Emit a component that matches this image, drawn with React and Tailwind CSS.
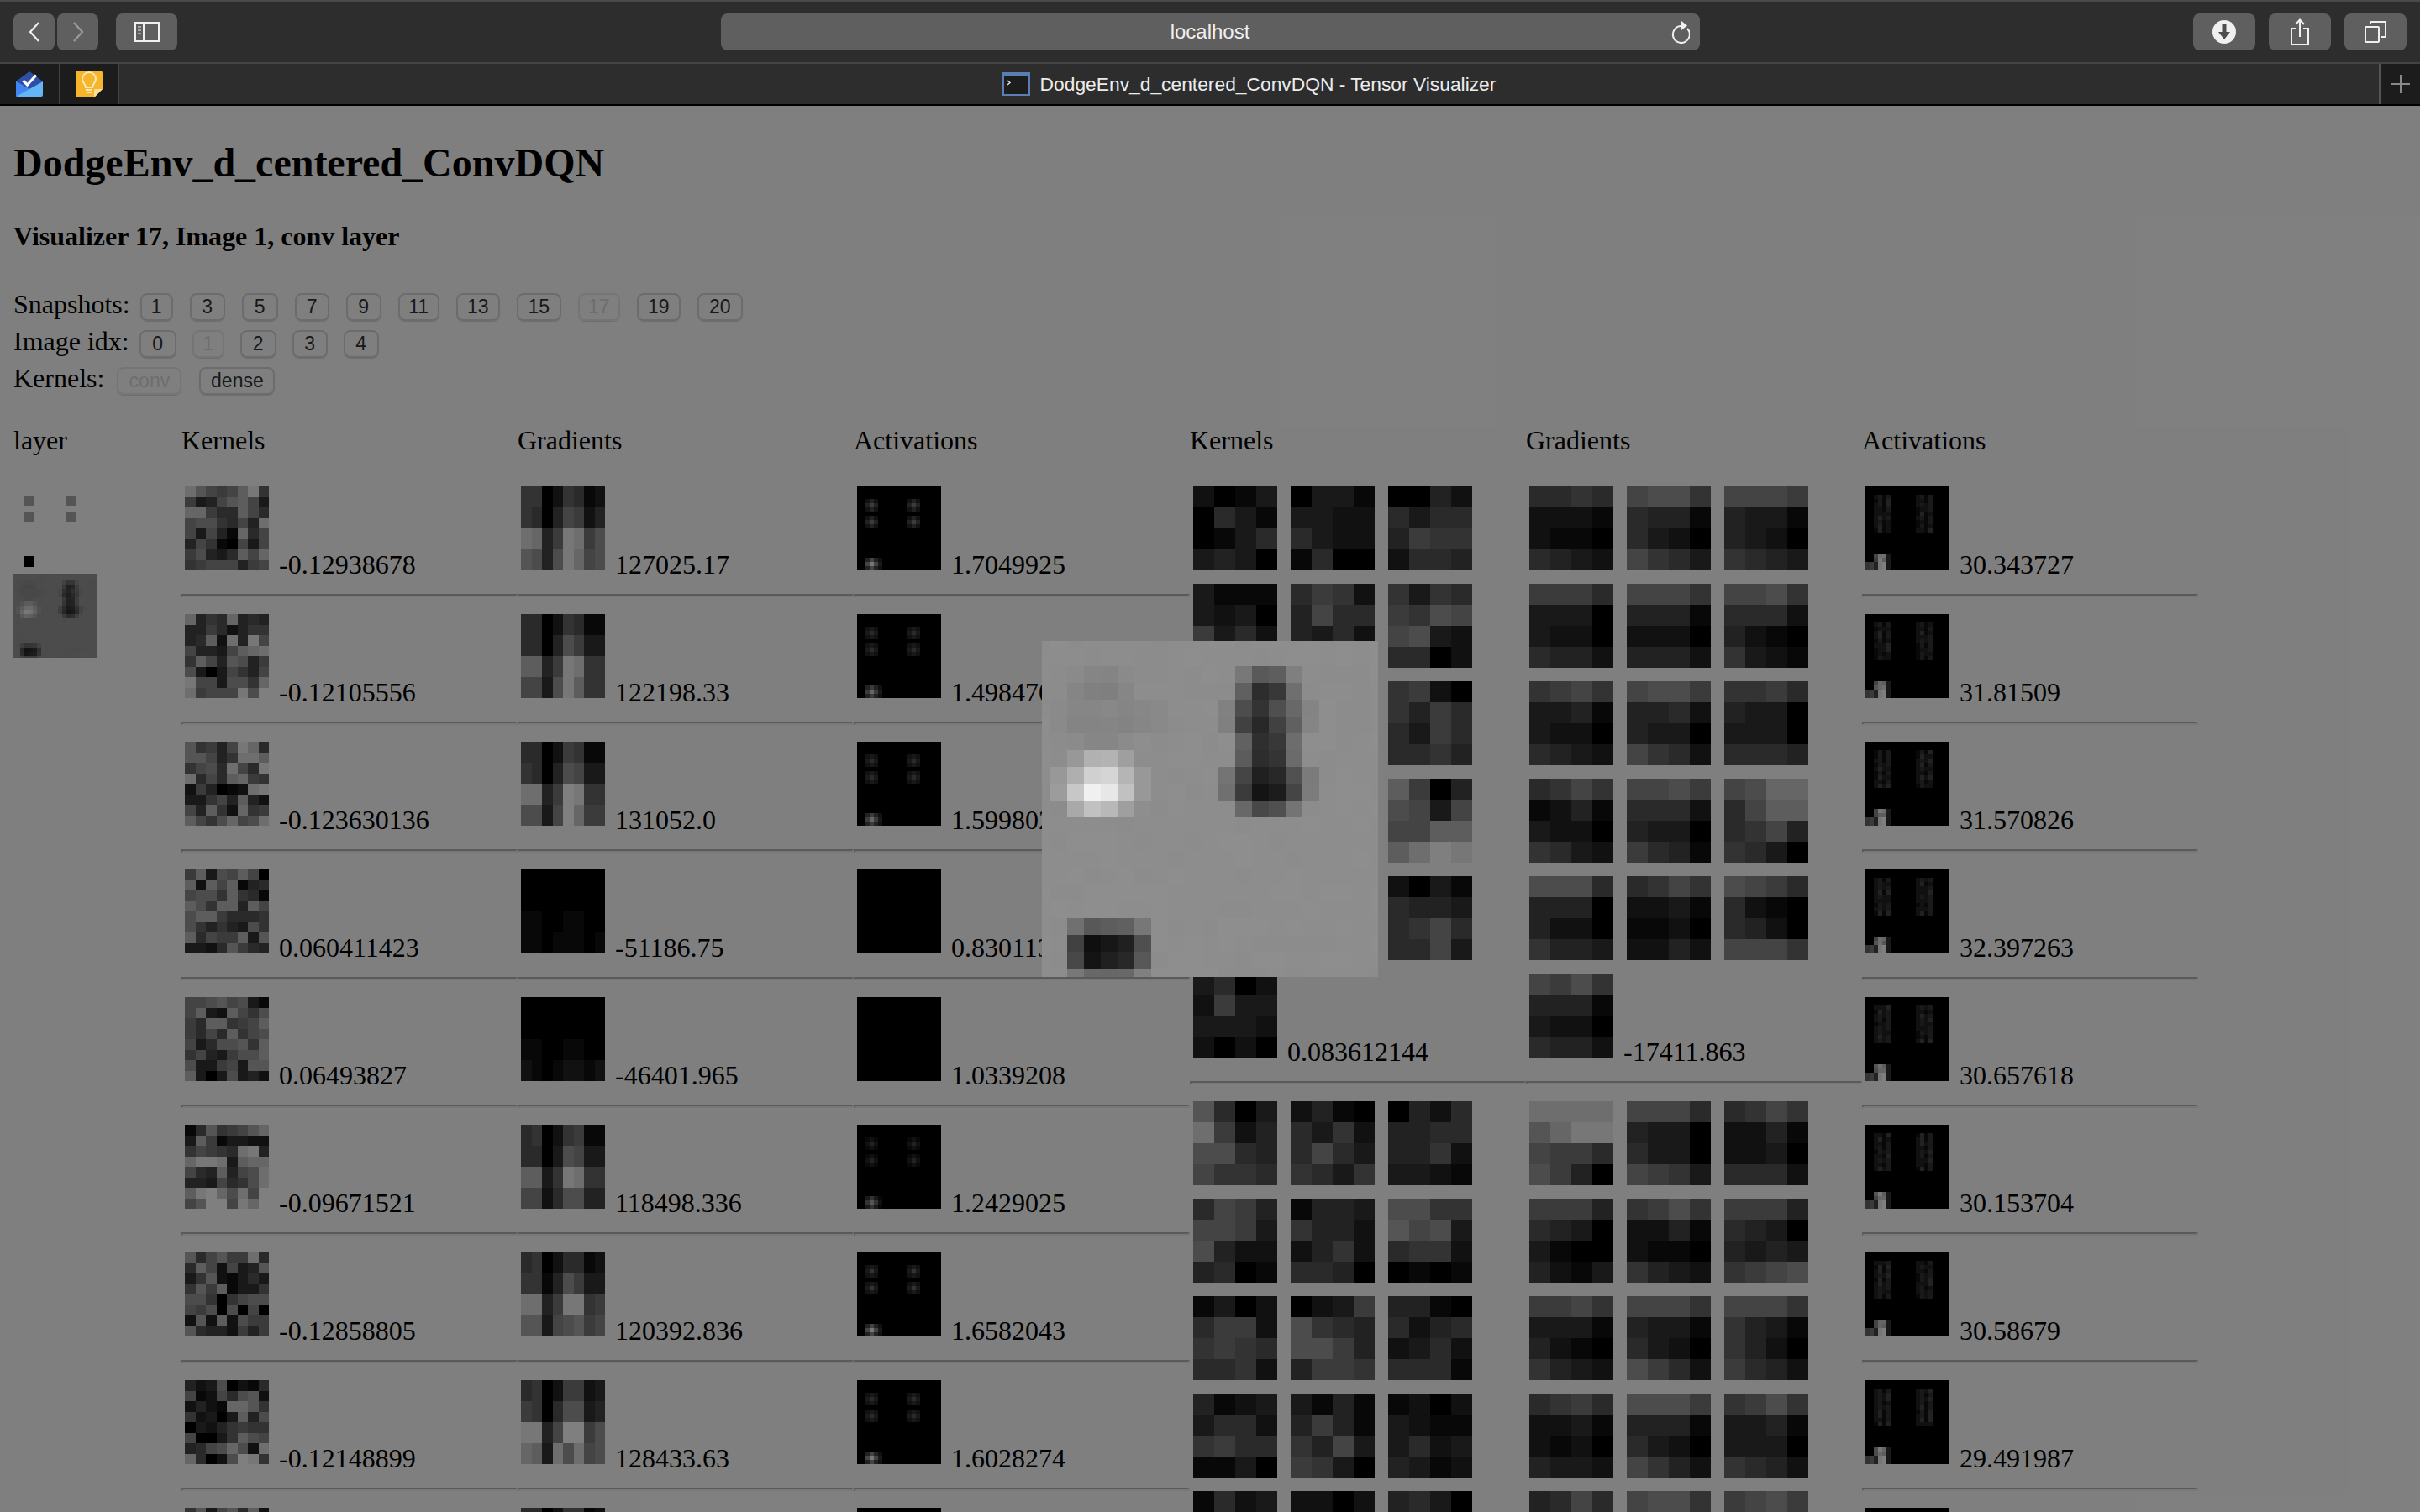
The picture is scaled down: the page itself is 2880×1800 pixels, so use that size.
import { Fragment } from "react";

// each character is one cell, 0-f, before the page is dimmed by the lightbox
const CONV_KERNELS = [
  "da878be6" + "7348ab83" + "cc755b85" + "8996584d" + "83841c58" + "48610838" + "79435b8c" + "67888478",
  "c465c454" + "44752466" + "45b2d4e8" + "84438bcd" + "6b84a947" + "93038648" + "e883996c" + "d7888e9f",
  "a6748ec5" + "aa846ddb" + "6895d85e" + "d585bc76" + "274012de" + "33684b42" + "84b62c67" + "b869c89d",
  "7b398b80" + "b2b8b145" + "8996b651" + "b96bb4b8" + "9bb75556" + "96464396" + "b5877b3a" + "3325a754",
  "889a8931" + "8b32b869" + "75bb678b" + "7585b689" + "83599a6b" + "6843799b" + "933783aa" + "b3039342",
  "15a678ac" + "3b713322" + "68765de4" + "ceed3bcc" + "854b489d" + "4438569d" + "befc9d8f" + "8aff8ecf",
  "a58a77d5" + "5b82834a" + "36a21353" + "6a7b1336" + "99606899" + "87909080" + "2a2b2977" + "a5442747",
  "42390215" + "812859a2" + "2421cca6" + "62303b49" + "03246766" + "80036b98" + "4589c92d" + "c5029fe6",
  "6a38a5b2" + "7348ab83" + "cc755b85" + "8996584d" + "83841c58" + "48610838" + "79435b8c" + "67888478",
];

const CONV_GRADIENTS = [
  "66026512" + "65048724" + "dc47ed79" + "a949ec89",
  "55026511" + "55049733" + "bb47ed66" + "8839eb66",
  "55027611" + "65049833" + "dd47fe66" + "9938fc77",
  "00000000" + "00000000" + "11001100" + "11011101",
  "00000000" + "00000000" + "11001100" + "21012212",
  "56026711" + "55039833" + "bb36ed66" + "88259944",
  "56025512" + "66149733" + "dd47ee67" + "aa389a78",
  "56027723" + "76059934" + "ee48ff79" + "cb3d9d89",
  "55026612" + "65049733" + "dc47ed79" + "a949ec89",
];

const DENSE_KERNELS_A = [
  "2013" + "0531" + "0135" + "3430", "0331" + "3322" + "5322" + "1500", "0042" + "5355" + "4766" + "2554",
  "3111" + "3230" + "7352" + "3104", "5762" + "4855" + "4352" + "3453", "6365" + "7698" + "8932" + "5502",
  "3111" + "3230" + "7352" + "3104", "5762" + "4855" + "4352" + "3453", "6720" + "6475" + "5375" + "5564",
  "3111" + "3230" + "7352" + "3104", "5762" + "4855" + "4352" + "3453", "b704" + "9838" + "88bb" + "bdfe",
  "3111" + "3230" + "7352" + "3104", "5762" + "4855" + "4352" + "3453", "2031" + "5443" + "5685" + "5583",
  "3502" + "2733" + "3332" + "2020",
];

const DENSE_GRADIENTS_A = [
  "5565" + "2221" + "2110" + "5432", "8996" + "5441" + "5320" + "8653", "8887" + "4331" + "4320" + "6543",
  "7775" + "3330" + "3220" + "5442", "8886" + "4441" + "2220" + "4442", "8896" + "5552" + "4210" + "6321",
  "6786" + "3341" + "3220" + "5432", "8997" + "4452" + "4330" + "8652", "6675" + "4330" + "3330" + "5554",
  "5686" + "1241" + "3220" + "6532", "8897" + "5552" + "4330" + "7541", "89cc" + "58bb" + "5684" + "6530",
  "9995" + "4440" + "4220" + "6443", "5686" + "2231" + "1120" + "2242", "9875" + "5210" + "5420" + "8886",
  "8796" + "4441" + "3220" + "5442",
];

const DENSE_KERNELS_B = [
  "a503" + "d724" + "9954" + "8665", "2410" + "5362" + "5853" + "6536", "0425" + "4455" + "4462" + "3321",
  "5874" + "8873" + "9422" + "4501", "1443" + "6442" + "2462" + "5540", "9966" + "a893" + "5662" + "0101",
  "1302" + "5772" + "6765" + "5562", "0237" + "9654" + "9974" + "4776", "4410" + "5245" + "2352" + "5551",
  "4123" + "3552" + "6755" + "1130", "3141" + "4741" + "6483" + "7630", "1202" + "3211" + "3523" + "4312",
  "1523" + "3352" + "6755" + "1130", "2202" + "3211" + "3523" + "4312", "4530" + "3211" + "3523" + "4312",
];

const DENSE_GRADIENTS_B = [
  "dddd" + "acee" + "8775" + "9740", "8885" + "4330" + "5330" + "8763", "5686" + "2241" + "2230" + "5552",
  "7774" + "5430" + "3100" + "4213", "6796" + "2241" + "2110" + "6432", "7774" + "5430" + "4343" + "6789",
  "7786" + "3331" + "4210" + "6432", "8886" + "4331" + "5320" + "9752", "8886" + "6431" + "6420" + "7542",
  "5675" + "2231" + "2120" + "4332", "9997" + "4441" + "5320" + "8642", "6796" + "3341" + "3330" + "6542",
  "4585" + "3341" + "3330" + "6542", "8996" + "4441" + "5320" + "8642", "7897" + "4441" + "5320" + "8642",
];

// the enlarged activation, 20px blocks shifted by half a block. two hex digits a cell
const B = "8d";
const fill = (n) => B.repeat(n);
const ENLARGED_ROWS = [
  fill(21),
  fill(21),
  fill(2) + "8a84848a" + fill(6) + "78585e80" + fill(5),
  fill(2) + "8680" + "8086" + fill(6) + "602e3870" + fill(5),
  fill(1) + "8a86868884868a" + fill(3) + "804c34506884" + fill(4),
  fill(1) + "8a8484848486" + "8a" + fill(3) + "804028406084" + fill(4),
  fill(2) + "8a86868a" + fill(6) + "6030386c" + fill(5),
  fill(2) + "98b0b4a0" + fill(6) + "5c2c346c" + fill(5),
  fill(1) + "98b0d0d4b498" + fill(4) + "744420285 07c".replace(" ", "") + fill(4),
  fill(1) + "9cc8f0e8c098" + fill(4) + "703c141c447c" + fill(4),
  fill(2) + "a8c0b8a0" + fill(6) + "68485074" + fill(5),
  fill(21),
  fill(21),
  fill(21),
  fill(21),
  fill(21),
  fill(21),
  fill(2) + "7058" + "5c6078" + fill(14),
  fill(2) + "4010182050" + fill(14),
  fill(2) + "4814202858" + fill(14),
  fill(2) + "7868686880" + fill(14),
];
const ENLARGED = ENLARGED_ROWS.join("").match(/../g).map((h, i) => parseInt(h, 16) + Math.round(noise(i) * 2 - 1));

function noise(i) {
  const x = Math.sin(i * 12.9898) * 43758.5453;
  return x - Math.floor(x);
}

const toCells = (grid) =>
  grid.map((v) => Math.max(0, Math.min(15, Math.round(v))).toString(16)).join("");

const dot = (grid, cx, cy, amp) => {
  for (let dy = -1; dy <= 1; dy++) {
    for (let dx = -1; dx <= 1; dx++) {
      const falloff = dx === 0 && dy === 0 ? 1 : dx === 0 || dy === 0 ? 0.55 : 0.3;
      const at = (cy + dy) * 20 + cx + dx;
      grid[at] = Math.max(grid[at], amp * falloff);
    }
  }
};

const convActivation = (top, bottom) => {
  const grid = new Array(400).fill(0);
  [[3, 4], [13, 4], [3, 8], [13, 8]].forEach(([x, y]) => dot(grid, x, y, top));
  dot(grid, 3, 18, bottom);
  dot(grid, 4, 18, bottom * 0.45);
  return toCells(grid);
};

const denseActivation = (seed) => {
  const grid = new Array(400).fill(0);
  for (let y = 2; y <= 10; y++) {
    [2, 12].forEach((x) => {
      grid[y * 20 + x] = 1 + noise(seed + y + x) * 1.5;
      grid[y * 20 + x + 1] = 2 + noise(seed + y * 3 + x) * 2;
      grid[y * 20 + x + 2] = 1 + noise(seed + y * 5 + x);
      grid[y * 20 + x + 3] = 2 + noise(seed + y * 7 + x) * 2;
    });
  }
  [16, 17].forEach((y) => {
    grid[y * 20 + 2] = 7 + noise(seed + y) * 3;
    grid[y * 20 + 3] = 11 + noise(seed + y * 2) * 3;
    grid[y * 20 + 4] = 10 + noise(seed + y * 3) * 3;
    grid[y * 20 + 5] = 3;
  });
  [18, 19].forEach((y) => {
    grid[y * 20] = 6;
    grid[y * 20 + 1] = 7;
    grid[y * 20 + 2] = 4;
    grid[y * 20 + 3] = 14;
    grid[y * 20 + 4] = 15;
    grid[y * 20 + 5] = 3;
  });
  return toCells(grid);
};

const CONV_ROWS = [
  ["-0.12938678", "127025.17", "1.7049925", [6.5, 14]],
  ["-0.12105556", "122198.33", "1.4984703", [5, 12]],
  ["-0.123630136", "131052.0", "1.5998023", [5, 12]],
  ["0.060411423", "-51186.75", "0.8301135", [0.4, 0.3]],
  ["0.06493827", "-46401.965", "1.0339208", [0.4, 0.4]],
  ["-0.09671521", "118498.336", "1.2429025", [4, 10]],
  ["-0.12858805", "120392.836", "1.6582043", [6, 14]],
  ["-0.12148899", "128433.63", "1.6028274", [5, 14]],
  ["", "", "", [6, 14]],
];

const DENSE_VALUES = ["30.343727", "31.81509", "31.570826", "32.397263", "30.657618", "30.153704", "30.58679", "29.491987", ""];

const SNAPSHOTS = [
  { label: "1", width: "w-[39px]" },
  { label: "3", width: "w-[42px]" },
  { label: "5", width: "w-[43px]" },
  { label: "7", width: "w-[41px]" },
  { label: "9", width: "w-[42px]" },
  { label: "11", width: "w-[49px]" },
  { label: "13", width: "w-[52px]" },
  { label: "15", width: "w-[53px]" },
  { label: "17", width: "w-[50px]", off: true },
  { label: "19", width: "w-[52px]" },
  { label: "20", width: "w-[54px]" },
];

const IMAGES = [
  { label: "0", width: "w-[44px]" },
  { label: "1", width: "w-[38px]", off: true },
  { label: "2", width: "w-[43px]" },
  { label: "3", width: "w-[42px]" },
  { label: "4", width: "w-[42px]" },
];

const KERNEL_TABS = [
  { label: "conv", width: "w-[77px]", off: true },
  { label: "dense", width: "w-[90px]" },
];

function Heat({ cells, values, cols, rows, className }) {
  const list = values ?? [...cells].map((c) => parseInt(c, 16) * 17);
  return (
    <svg viewBox={`0 0 ${cols} ${rows}`} preserveAspectRatio="none" shapeRendering="crispEdges" className={className}>
      {list.map((v, i) => (
        <rect key={i} x={i % cols} y={Math.floor(i / cols)} width="1.02" height="1.02" fill={`rgb(${v},${v},${v})`} />
      ))}
    </svg>
  );
}

const THUMB = "inline align-baseline w-[100px] h-[100px] m-1";

function Rule() {
  return <hr className="my-4 h-1 border-2 border-t-[#b4b4b4] border-l-[#b4b4b4] border-r-[#f0f0f0] border-b-[#f0f0f0]" />;
}

function Row({ cells, cols, rows, value }) {
  return (
    <>
      <div>
        <Heat cells={cells} cols={cols} rows={rows} className={THUMB} /> {value}
      </div>
      <Rule />
    </>
  );
}

function DenseGroup({ kernels, value }) {
  return (
    <>
      <div>
        {kernels.map((k, i) => (
          <Fragment key={i}>
            <Heat cells={k} cols={4} rows={4} className={THUMB} />{" "}
          </Fragment>
        ))}
        {value}
      </div>
      {value && <Rule />}
    </>
  );
}

function Enlarged({ className }) {
  return (
    <svg viewBox="0 0 400 400" shapeRendering="crispEdges" className={className}>
      <g transform="translate(-10 -10)">
        <Heat values={ENLARGED} cols={21} rows={21} className="h-[420px] w-[420px]" />
      </g>
    </svg>
  );
}

function ControlButton({ label, width, off }) {
  return (
    <button
      className={`${width} h-[33px] rounded-lg border-2 text-center font-['Liberation_Sans',sans-serif] text-[23px] leading-none shadow-[0_1px_1px_rgba(0,0,0,0.15)] ${
        off ? "border-[#ebebeb] text-[#dcdcdc]" : "border-[#d8d8d8] text-[#333333]"
      }`}
    >
      {label}
    </button>
  );
}

function Controls({ title, items, gap, labelGap = "mr-3" }) {
  return (
    <div className="flex h-[44px] items-baseline">
      <span className={labelGap}>{title}</span>
      <div className={`flex items-baseline ${gap}`}>
        {items.map((b) => (
          <ControlButton key={b.label} {...b} />
        ))}
      </div>
    </div>
  );
}

function ToolButton({ className, children }) {
  return <div className={`flex h-11 items-center justify-center rounded-lg bg-[#5f5f5f] ${className}`}>{children}</div>;
}

function BrowserChrome() {
  return (
    <div className="h-[126px] shrink-0 bg-[#2d2d2d] text-[#f0f0f0]">
      <div className="h-[76px] border-y-2 border-t-[#4a4a4a] border-b-[#444444]">
        <div className="grid h-full grid-cols-[1fr_1165px_1fr] items-center px-4">
          <div className="flex">
            <ToolButton className="mr-[3px] w-[49px]">
              <svg width="16" height="24" viewBox="0 0 16 24" fill="none" stroke="#f0f0f0" strokeWidth="2.2">
                <path d="M13 1 L3 12 L13 23" />
              </svg>
            </ToolButton>
            <ToolButton className="mr-[21px] w-[49px]">
              <svg width="16" height="24" viewBox="0 0 16 24" fill="none" stroke="#9a9a9a" strokeWidth="2.2">
                <path d="M3 1 L13 12 L3 23" />
              </svg>
            </ToolButton>
            <ToolButton className="w-[73px]">
              <svg width="30" height="24" viewBox="0 0 30 24" fill="none" stroke="#f0f0f0" strokeWidth="2">
                <rect x="1" y="1" width="28" height="22" />
                <path d="M11 1 V23" />
                <path d="M4 6 H8 M4 10 H8 M4 14 H8" strokeWidth="1.6" stroke="#bdbdbd" />
              </svg>
            </ToolButton>
          </div>
          <div className="relative flex h-11 items-center justify-center rounded-lg bg-[#5f5f5f] font-['Liberation_Sans',sans-serif] text-[24px]">
            localhost
            <svg className="absolute right-3 top-[8px]" width="24" height="28" viewBox="0 0 24 28" fill="none" stroke="#f0f0f0" strokeWidth="2">
              <path d="M14 7 A10 10 0 1 0 21 10" />
              <path d="M14 1 L21 6.5 L14 12 Z" fill="#f0f0f0" stroke="none" />
            </svg>
          </div>
          <div className="flex justify-end gap-4">
            <ToolButton className="w-[74px]">
              <svg width="28" height="28" viewBox="0 0 28 28">
                <circle cx="14" cy="14" r="14" fill="#f0f0f0" />
                <path d="M11.5 5 H16.5 V14 H21 L14 23 L7 14 H11.5 Z" fill="#4d4d4d" />
              </svg>
            </ToolButton>
            <ToolButton className="w-[74px]">
              <svg width="24" height="32" viewBox="0 0 24 32" fill="none" stroke="#f0f0f0" strokeWidth="2">
                <path d="M8 12 H2 V31 H22 V12 H16" />
                <path d="M12 22 V2 M7 7 L12 1.5 L17 7" />
              </svg>
            </ToolButton>
            <ToolButton className="w-[74px]">
              <svg width="26" height="26" viewBox="0 0 26 26" fill="none" stroke="#f0f0f0" strokeWidth="2">
                <rect x="1" y="7" width="16" height="18" rx="1" />
                <path d="M7 3 V1 H25 V19 H20" />
              </svg>
            </ToolButton>
          </div>
        </div>
      </div>
      <div className="flex h-[50px] border-b-2 border-black">
        <div className="flex w-[70px] items-center justify-center bg-[#1c1c1c]">
          <svg width="32" height="30" viewBox="0 0 32 30">
            <path d="M16 0 L32 12 L16 24 L0 12 Z" fill="#2e4ea8" />
            <path d="M8.5 11 L13.5 16 L24 4.5" fill="none" stroke="#ffffff" strokeWidth="3.2" />
            <path d="M0 12 L16 21 L32 12 V28 Q32 30 30 30 H2 Q0 30 0 28 Z" fill="#64b5f6" />
            <path d="M0 12 L16 21 L0 30 Z" fill="#4285f4" />
          </svg>
        </div>
        <div className="flex w-[72px] items-center justify-center border-x-2 border-[#444444] bg-[#1c1c1c]">
          <svg width="32" height="32" viewBox="0 0 32 32">
            <path d="M3 0 H29 Q32 0 32 3 V22 L22 32 H3 Q0 32 0 29 V3 Q0 0 3 0 Z" fill="#f6b52b" />
            <path d="M32 22 H24 Q22 22 22 24 V32 Z" fill="#fbe09a" />
            <path d="M12 20 C12 16 8 15 8 10 A8 8 0 0 1 24 10 C24 15 20 16 20 20 Z M12 23 H20 M13 26 H19" fill="none" stroke="#fbe7b8" strokeWidth="2" />
          </svg>
        </div>
        <div className="flex flex-1 items-center justify-center gap-3 font-['Liberation_Sans',sans-serif] text-[22.8px] text-[#ececec]">
          <svg width="33" height="28" viewBox="0 0 33 28">
            <rect width="33" height="28" fill="#5b7fb5" />
            <rect x="2" y="5" width="29" height="21" fill="#1d1d1d" />
            <path d="M6 10 L9 12.5 L6 15" fill="none" stroke="#dddddd" strokeWidth="1.5" />
          </svg>
          DodgeEnv_d_centered_ConvDQN - Tensor Visualizer
        </div>
        <div className="flex w-[49px] items-center justify-center border-l-2 border-[#555555] bg-[#1c1c1c]">
          <svg width="24" height="24" viewBox="0 0 24 24" stroke="#8a8a8a" strokeWidth="2">
            <path d="M12 1 V23 M1 12 H23" />
          </svg>
        </div>
      </div>
    </div>
  );
}

export default function App() {
  return (
    <div className="flex h-[1800px] w-[2880px] flex-col overflow-hidden">
      <BrowserChrome />

      <div className="relative flex-1 overflow-hidden bg-white">
        <div className="px-4 font-['Liberation_Serif',serif] text-[32px] leading-[normal] text-black">
          <h2 className="pt-10 pb-[42px] text-[48px] font-bold leading-[normal]">DodgeEnv_d_centered_ConvDQN</h2>
          <h4 className="mb-11 font-bold">Visualizer 17, Image 1, conv layer</h4>

          <Controls title="Snapshots:" items={SNAPSHOTS} gap="gap-[20px]" />
          <Controls title="Image idx:" items={IMAGES} gap="gap-[19px]" />
          <Controls title="Kernels:" items={KERNEL_TABS} gap="gap-[21px]" labelGap="mr-[15px]" />

          <div className="mt-[30px] flex">
            <div className="w-[200px]">
              <div className="mb-10">layer</div>
              <svg viewBox="0 0 100 100" shapeRendering="crispEdges" className="h-[100px] w-[100px]">
                <rect x="12" y="7" width="12" height="12" fill="#aaaaaa" />
                <rect x="62" y="7" width="12" height="12" fill="#aaaaaa" />
                <rect x="12" y="27" width="12" height="12" fill="#aaaaaa" />
                <rect x="62" y="27" width="12" height="12" fill="#aaaaaa" />
                <rect x="13" y="79" width="12" height="13" fill="#000000" />
              </svg>
              <Enlarged className="h-[100px] w-[100px] opacity-90" />
            </div>

            <div className="w-[400px]">
              <div className="mb-8">Kernels</div>
              {CONV_ROWS.map((r, i) => (
                <Row key={i} cells={CONV_KERNELS[i]} cols={8} rows={8} value={r[0]} />
              ))}
            </div>
            <div className="w-[400px]">
              <div className="mb-8">Gradients</div>
              {CONV_ROWS.map((r, i) => (
                <Row key={i} cells={CONV_GRADIENTS[i]} cols={8} rows={4} value={r[1]} />
              ))}
            </div>
            <div className="w-[400px]">
              <div className="mb-8">Activations</div>
              {CONV_ROWS.map((r, i) => (
                <Row key={i} cells={convActivation(r[3][0], r[3][1])} cols={20} rows={20} value={r[2]} />
              ))}
            </div>

            <div className="w-[400px]">
              <div className="mb-8">Kernels</div>
              <DenseGroup kernels={DENSE_KERNELS_A} value="0.083612144" />
              <DenseGroup kernels={DENSE_KERNELS_B} />
            </div>
            <div className="w-[400px]">
              <div className="mb-8">Gradients</div>
              <DenseGroup kernels={DENSE_GRADIENTS_A} value="-17411.863" />
              <DenseGroup kernels={DENSE_GRADIENTS_B} />
            </div>
            <div className="w-[400px]">
              <div className="mb-8">Activations</div>
              {DENSE_VALUES.map((v, i) => (
                <Row key={i} cells={denseActivation(i * 31 + 7)} cols={20} rows={20} value={v} />
              ))}
            </div>
          </div>
        </div>

        {/* lightbox */}
        <div className="absolute inset-0 flex items-center justify-center bg-black/50">
          <Enlarged className="h-[400px] w-[400px]" />
        </div>
      </div>
    </div>
  );
}
